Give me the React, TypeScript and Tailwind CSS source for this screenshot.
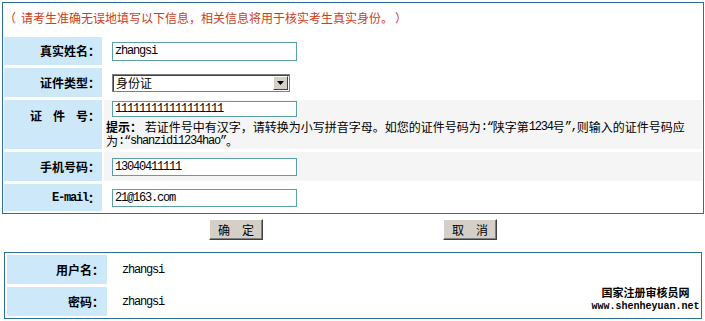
const cjk = "font-['Noto_Sans_CJK_SC',sans-serif]";
const mono = "font-['Liberation_Mono','Noto_Sans_CJK_SC',monospace] tracking-[-1.2px]";

function M({ children }: { children: React.ReactNode }) {
  return <span className={`${mono} leading-none`}>{children}</span>;
}

function TextBox({ value, h = "h-[19px]" }: { value: string; h?: string }) {
  return (
    <input
      readOnly
      value={value}
      className={`ml-[8px] w-[185px] ${h} border border-[#5b9fa9] bg-white px-[2px] text-[12px] text-black outline-none ${mono}`}
    />
  );
}

function Label({ children, top }: { children: React.ReactNode; top?: boolean }) {
  return (
    <div
      className={`w-[98px] shrink-0 bg-[#cde8f8] flex justify-end pr-[2px] text-[12px] leading-[12px] font-bold text-black ${
        top ? "items-start pt-[10px]" : "items-center"
      }`}
    >
      {children}
    </div>
  );
}

function Button({ text }: { text: string }) {
  return (
    <button className="w-[54px] h-[21px] bg-[#d4d0c8] border border-t-white border-l-white border-b-[#404040] border-r-[#404040] shadow-[inset_-1px_-1px_0_#808080] text-[12px] leading-[12px] text-black">
      {text}
    </button>
  );
}

export default function App() {
  return (
    <div className={`relative w-[705px] h-[321px] bg-white overflow-hidden ${cjk}`}>
      {/* form box */}
      <div className="ml-[2px] mt-[2px] w-[702px] h-[212px] border border-[#2d7096] flex flex-col">
        <div className="h-[34px] pl-[5px] pt-[9px] text-[12px] leading-[12px] text-[#cc3d1a] whitespace-nowrap">
          <span className="inline-block -ml-[4px] w-[17px]">（</span>请考生准确无误地填写以下信息，相关信息将用于核实考生真实身份。<span className="inline-block pl-[2px]">）</span>
        </div>

        <div className="flex flex-col gap-[3px] pl-[1px] pr-[1px]">
          <div className="flex h-[28px] gap-[2px]">
            <Label>真实姓名：</Label>
            <div className="flex-1 flex items-center bg-white">
              <TextBox value="zhangsi" />
            </div>
          </div>

          <div className="flex h-[29px] gap-[2px]">
            <Label>证件类型：</Label>
            <div className="flex-1 flex items-center bg-white">
              <div className="ml-[8px] mt-[1px] w-[178px] h-[18px] border border-[#7f7f7f] shadow-[inset_1px_1px_0_#404040] bg-white flex items-center justify-between">
                <span className="pl-[3px] text-[12px] leading-[12px] text-black">身份证</span>
                <span className="w-[15px] h-[14px] mr-[1px] bg-[#d4d0c8] border border-t-white border-l-white border-b-[#404040] border-r-[#404040] flex items-center justify-center">
                  <svg width="7" height="4" viewBox="0 0 7 4">
                    <path d="M0 0h7L3.5 4z" fill="#000" />
                  </svg>
                </span>
              </div>
            </div>
          </div>

          <div className="flex h-[49px] gap-[2px]">
            <Label top>
              证<span className="inline-block w-[11px]" />件<span className="inline-block w-[11px]" />号：
            </Label>
            <div className="flex-1 flex flex-col bg-[#f5f5f5]">
              <div className="mt-[1px] h-[16px] flex">
                <TextBox value="111111111111111111" h="h-[16px]" />
              </div>
              <div className="mt-[3px] pl-[2px] h-[14px] flex items-center text-[12px] leading-[14px] text-black whitespace-nowrap">
                <b>提示：</b>&nbsp;若证件号中有汉字，请转换为小写拼音字母。如您的证件号码为<M>:“</M>陕字第<M>1234</M>号<M>”,</M>则输入的证件号码应
              </div>
              <div className="pl-[2px] h-[14px] flex items-center text-[12px] leading-[14px] text-black whitespace-nowrap">
                为<M>:“shanzidi1234hao”</M>。
              </div>
            </div>
          </div>

          <div className="flex h-[29px] gap-[2px]">
            <Label>手机号码：</Label>
            <div className="flex-1 flex items-center bg-[#f5f5f5]">
              <TextBox value="13040411111" h="h-[18px]" />
            </div>
          </div>

          <div className="flex h-[27px] gap-[2px]">
            <Label>
              <span className="font-['Liberation_Mono',monospace] tracking-[-1.2px]">E-mail</span>：
            </Label>
            <div className="flex-1 flex items-center bg-white">
              <TextBox value="21@163.com" h="h-[18px]" />
            </div>
          </div>
        </div>
      </div>

      {/* buttons */}
      <div className="flex mt-[5px] pl-[209px] gap-[180px]">
        <Button text="确　定" />
        <Button text="取　消" />
      </div>

      {/* account box */}
      <div className="relative ml-[4px] mt-[12px] w-[698px] h-[67px] border border-[#2d7096] flex flex-col gap-[3px] pt-[2px] pl-[2px]">
        <div className="flex h-[29px] gap-[2px]">
          <div className="w-[100px] bg-[#cde8f8] flex items-center justify-end pr-[3px] text-[12px] leading-[12px] font-bold">
            用户名：
          </div>
          <div className={`flex items-center pl-[13px] text-[12px] ${mono}`}>zhangsi</div>
        </div>
        <div className="flex h-[29px] gap-[2px]">
          <div className="w-[100px] bg-[#cde8f8] flex items-center justify-end pr-[3px] text-[12px] leading-[12px] font-bold">
            密码：
          </div>
          <div className={`flex items-center pl-[13px] text-[12px] ${mono}`}>zhangsi</div>
        </div>

        <div className="absolute left-[585px] top-[32px] w-[111px] flex flex-col items-center text-black font-bold">
          <span className="text-[11px] leading-[14px]">国家注册审核员网</span>
          <span className="font-['Liberation_Mono',monospace] text-[10px] leading-[15px]">www.shenheyuan.net</span>
        </div>
      </div>
    </div>
  );
}
